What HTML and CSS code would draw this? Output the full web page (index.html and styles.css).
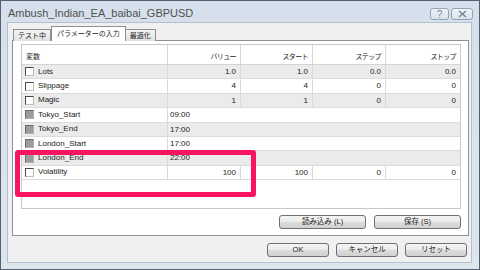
FILE: index.html
```html
<!DOCTYPE html>
<html lang="ja">
<head>
    <meta charset="UTF-8">
    <title>Ambush_Indian_EA_baibai_GBPUSD</title>
    <link rel="stylesheet" href="styles.css">
</head>
<body>
    <div class="window">
        <div class="title-bar">
            <span class="title">Ambush_Indian_EA_baibai_GBPUSD</span>
            <div class="cap-btns">
                <span class="cap-btn help">?</span>
                <span class="cap-btn close">
                    <svg width="9" height="8" viewBox="0 0 9 8"><path d="M1 1l7 6M8 1l-7 6" stroke="#7a838e" stroke-width="1.4" fill="none"/></svg>
                </span>
            </div>
        </div>
        <div class="client">
            <ul class="tabs">
                <li>テスト中</li>
                <li class="active">パラメーターの入力</li>
                <li>最適化</li>
            </ul>
            <div class="panel">
                <div class="grid">
                    <div class="row head">
                        <div class="cell">変数</div>
                        <div class="cell num">バリュー</div>
                        <div class="cell num">スタート</div>
                        <div class="cell num">ステップ</div>
                        <div class="cell num">ストップ</div>
                    </div>
                    <div class="row gray">
                        <div class="cell name"><span class="check"></span>Lots</div>
                        <div class="cell num">1.0</div>
                        <div class="cell num">1.0</div>
                        <div class="cell num">0.0</div>
                        <div class="cell num">0.0</div>
                    </div>
                    <div class="row">
                        <div class="cell name"><span class="check"></span>Slippage</div>
                        <div class="cell num">4</div>
                        <div class="cell num">4</div>
                        <div class="cell num">0</div>
                        <div class="cell num">0</div>
                    </div>
                    <div class="row gray">
                        <div class="cell name"><span class="check"></span>Magic</div>
                        <div class="cell num">1</div>
                        <div class="cell num">1</div>
                        <div class="cell num">0</div>
                        <div class="cell num">0</div>
                    </div>
                    <div class="row">
                        <div class="cell name"><span class="check off"></span>Tokyo_Start</div>
                        <div class="cell text">09:00</div>
                    </div>
                    <div class="row gray">
                        <div class="cell name"><span class="check off"></span>Tokyo_End</div>
                        <div class="cell text">17:00</div>
                    </div>
                    <div class="row">
                        <div class="cell name"><span class="check off"></span>London_Start</div>
                        <div class="cell text">17:00</div>
                    </div>
                    <div class="row gray">
                        <div class="cell name"><span class="check off"></span>London_End</div>
                        <div class="cell text">22:00</div>
                    </div>
                    <div class="row">
                        <div class="cell name"><span class="check"></span>Volatility</div>
                        <div class="cell num">100</div>
                        <div class="cell num">100</div>
                        <div class="cell num">0</div>
                        <div class="cell num">0</div>
                    </div>
                </div>
                <div class="panel-btns">
                    <button class="btn wide">読み込み (L)</button>
                    <button class="btn wide">保存 (S)</button>
                </div>
            </div>
            <div class="dialog-btns">
                <button class="btn">OK</button>
                <button class="btn">キャンセル</button>
                <button class="btn">リセット</button>
            </div>
        </div>
        <!-- 赤枠 -->
        <div class="highlight"></div>
    </div>
</body>
</html>
```

FILE: styles.css
```css
*{
    margin: 0;
    padding: 0;
    box-sizing: border-box;
}
li{
    list-style: none;
}
body{
    background-color: #fff;
    font-family: "Liberation Sans", "Noto Sans CJK JP", sans-serif;
    font-size: 8px;
    color: #222;
}
.window{
    width: 480px;
    height: 270px;
    border: 1px solid #55606e;
    background: linear-gradient(#d6e0ec, #dde5ef);
    position: relative;
    display: flex;
    flex-direction: column;
}
.title-bar{
    height: 21px;
    display: flex;
    align-items: center;
    padding: 0 6px 0 7px;
}
.title{
    font-size: 11px;
    color: #505050;
    flex: 1;
    margin-top: 3px;
}
.cap-btns{
    display: flex;
    gap: 2px;
    margin-top: 5px;
}
.cap-btn{
    height: 12px;
    border: 1px solid #94a3b6;
    border-radius: 3px;
    background: linear-gradient(#eef3f9, #d9e2ed);
    display: flex;
    align-items: center;
    justify-content: center;
    color: #7a838e;
    font-size: 10px;
}
.help{
    width: 19px;
}
.close{
    width: 22px;
}
.client{
    flex: 1;
    margin: 0 7px 6px 6px;
    border: 1px solid #b4c0ce;
    background-color: #f0f0f0;
    display: flex;
    flex-direction: column;
}
.tabs{
    display: flex;
    height: 17px;
    padding-left: 5px;
    align-items: flex-end;
    font-size: 7px;
}
.tabs li{
    height: 12px;
    padding: 0 4px;
    border: 1px solid #8c9099;
    border-bottom: none;
    background: linear-gradient(#f4f4f4, #e1e1e1);
    line-height: 11px;
    margin-bottom: -1px;
    position: relative;
}
.tabs li + li{
    border-left: none;
}
.tabs .active{
    height: 15px;
    background: #fff;
    border-left: 1px solid #8c9099;
    padding: 0 5px;
    line-height: 13px;
    z-index: 1;
}
.tabs .active + li{
    border-left: none;
}
.panel{
    height: 196px;
    margin: 0 2px 0 4px;
    border: 1px solid #8c9099;
    background-color: #fff;
    padding: 3px 7px 0 8px;
}
.grid{
    height: 165px;
    border: 1px solid #c8c8c8;
    background-color: #fff;
}
.row{
    display: grid;
    grid-template-columns: 146px 73px 72px 73px 1fr;
    height: 14.4px;
    line-height: 14px;
    border-bottom: 1px solid #dcdcdc;
}
.row.gray{
    background-color: #ebebeb;
}
.row.head{
    height: 20px;
    line-height: 24px;
    font-size: 7px;
    border-bottom: 1px solid #d4d4d4;
}
.cell{
    border-right: 1px solid #dadada;
    white-space: nowrap;
    overflow: hidden;
    padding: 0 4px;
}
.cell:last-child{
    border-right: none;
}
.cell.num{
    text-align: right;
    padding-right: 4px;
}
.head .cell.num{
    letter-spacing: -0.6px;
}
.cell.text{
    grid-column: 2 / -1;
    padding-left: 2px;
}
.cell.name{
    display: flex;
    align-items: center;
    padding-left: 3px;
}
.check{
    width: 9px;
    height: 9px;
    border: 1px solid;
    border-color: #4a4a4a #bdbdbd #bdbdbd #4a4a4a;
    background-color: #fff;
    margin-right: 4px;
}
.check.off{
    background-color: #9c9c9c;
    border-color: #6a6a6a #b0b0b0 #b0b0b0 #6a6a6a;
}
.panel-btns{
    display: flex;
    justify-content: flex-end;
    gap: 8px;
    margin-top: 6px;
}
.btn{
    width: 62px;
    height: 14px;
    border: 1px solid #707070;
    border-radius: 3px;
    background: linear-gradient(#f4f4f4, #ebebeb 50%, #dddddd 50%, #d1d1d1);
    font-family: "Liberation Sans", "Noto Sans CJK JP", sans-serif;
    font-size: 7.5px;
    color: #222;
    line-height: 12px;
}
.btn.wide{
    width: 87px;
}
.dialog-btns{
    display: flex;
    justify-content: flex-end;
    gap: 7px;
    margin-top: 7px;
    padding-right: 4px;
}
.highlight{
    position: absolute;
    left: 14px;
    top: 149px;
    width: 241px;
    height: 47px;
    border: 5px solid #f8145f;
    border-radius: 3px;
}
```
